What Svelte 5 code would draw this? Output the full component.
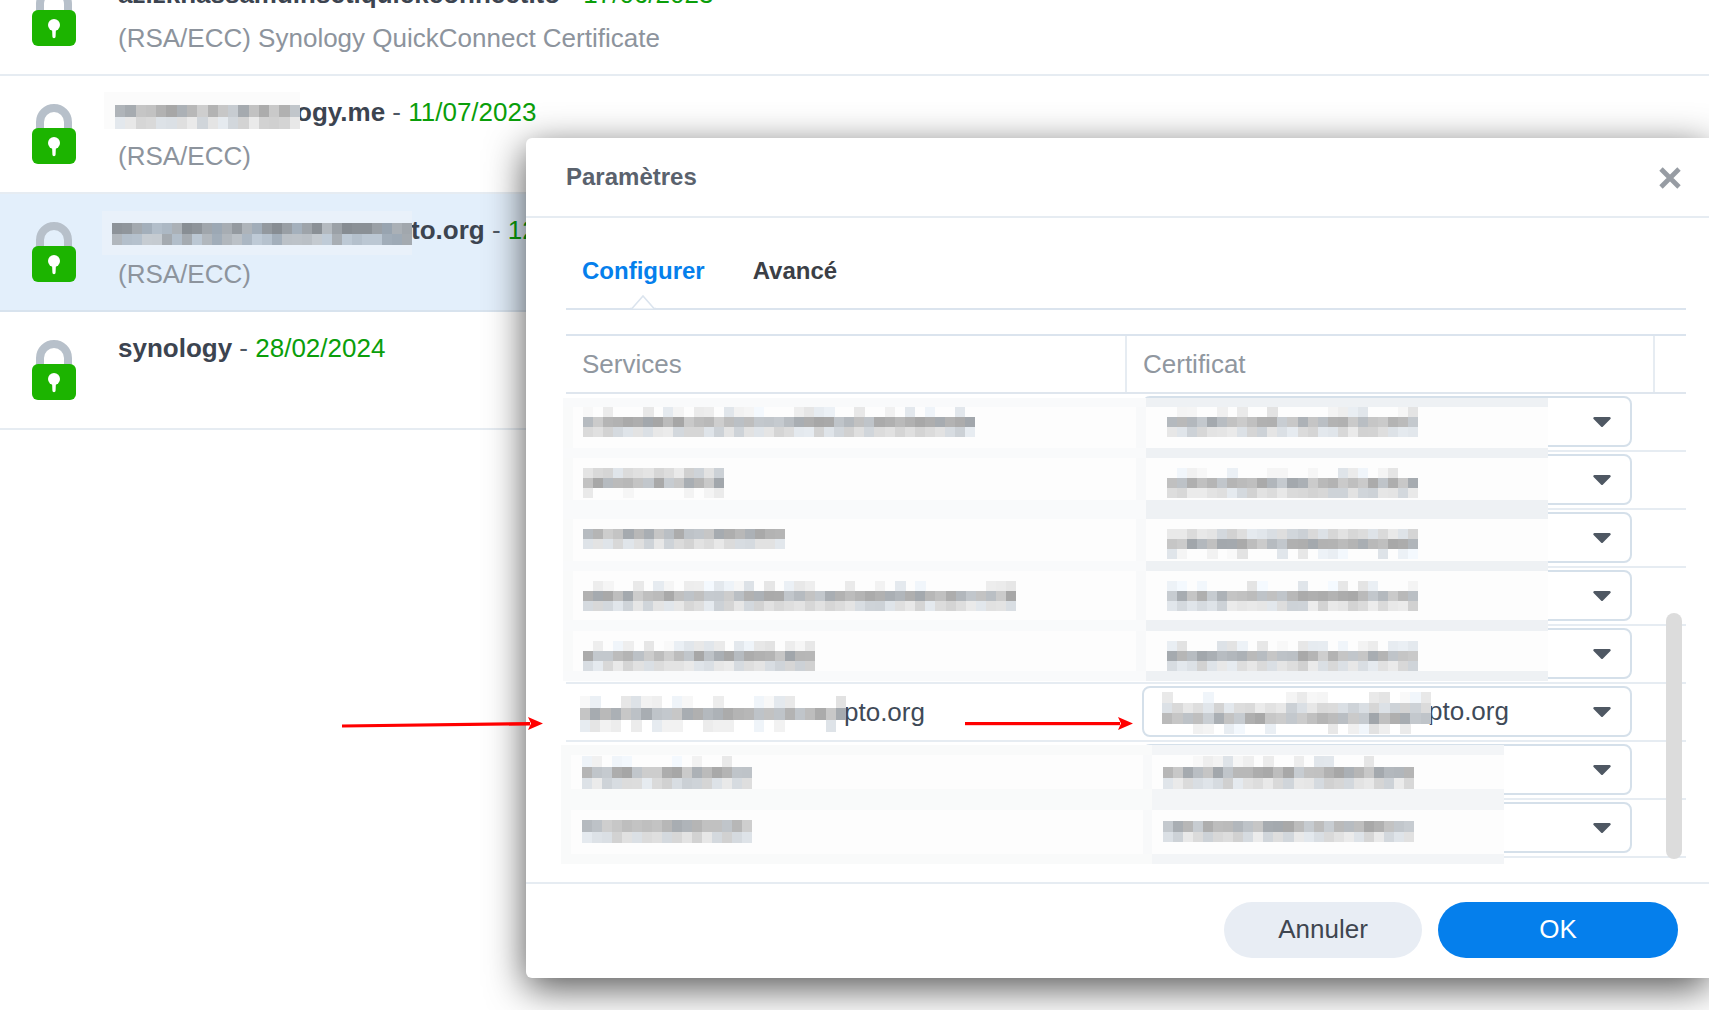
<script>
  const certs = [
    { title: 'azizkhassamdlr.setiquickconnect.to', date: '17/06/2023', sub: '(RSA/ECC) Synology QuickConnect Certificate' },
    { spacer: 178, title: 'ogy.me', date: '11/07/2023', sub: '(RSA/ECC)' },
    { spacer: 293, title: 'to.org', date: '12/07/2023', sub: '(RSA/ECC)', selected: true },
    { title: 'synology', date: '28/02/2024', sub: '' }
  ];

  const rows = [
    {}, {}, {}, {}, {},
    { service: 'pto.org', serviceGap: 264, cert: 'pto.org', certGap: 265 },
    {}, {}
  ];

  function rng(seed) {
    let s = seed * 9301 + 49297;
    return () => {
      s = (s * 9301 + 49297) % 233280;
      return s / 233280;
    };
  }

  const PROFILES = {
    faint: [226, 250, 0.5],
    mid: [208, 236, 1],
    dark: [166, 206, 1],
    deep: [140, 190, 1],
    soft: [170, 205, 1]
  };

  function mosaic(seed, x, y, w, h, cw, bands, tint = 5) {
    const r = rng(seed);
    const out = [];
    const cols = Math.round(w / cw);
    const nrows = bands.length;
    const rowH = h / nrows;
    const cellW = w / cols;
    for (let j = 0; j < nrows; j++) {
      const [lo, hi, cover] = PROFILES[bands[j]];
      for (let i = 0; i < cols; i++) {
        const keep = r();
        const t = r();
        const tone = r();
        if (keep > cover) continue;
        const v = Math.round(lo + (hi - lo) * t);
        const blue = tone > 0.6 ? tint : tint > 5 ? tint / 2 : 0;
        const fill = `rgb(${v - blue},${v},${Math.min(255, v + blue)})`;
        out.push({ x: x + i * cellW, y: y + j * rowH, w: cellW + 0.3, h: rowH + 0.3, fill });
      }
    }
    return out;
  }

  const fl = ['faint', 'dark', 'mid'];
  const dm = ['mid', 'dark', 'faint'];
  const two = ['dark', 'mid'];

  const cells = [
    ...mosaic(1, 115, 105, 185, 24, 10.2, ['dark', 'mid']),
    ...mosaic(2, 112, 223, 300, 22, 10, ['deep', 'soft'], 12),
    ...mosaic(3, 583, 407, 392, 30, 10, fl),
    ...mosaic(4, 583, 468, 141, 30, 10, dm),
    ...mosaic(5, 583, 529, 202, 20, 10, two),
    ...mosaic(6, 583, 581, 433, 30, 10, fl),
    ...mosaic(7, 583, 641, 232, 30, 10, fl),
    ...mosaic(8, 580, 696, 266, 36, 10.2, ['faint', 'dark', 'faint']),
    ...mosaic(9, 582, 756, 170, 33, 10, fl),
    ...mosaic(10, 582, 820, 170, 23, 10, two),
    ...mosaic(11, 1167, 407, 251, 30, 10, fl),
    ...mosaic(12, 1167, 468, 251, 30, 10, fl),
    ...mosaic(13, 1167, 529, 251, 30, 10, dm),
    ...mosaic(14, 1167, 581, 251, 30, 10, fl),
    ...mosaic(15, 1167, 641, 251, 30, 10, fl),
    ...mosaic(16, 1162, 692, 269, 42, 10.3, ['faint', 'mid', 'dark', 'faint']),
    ...mosaic(17, 1163, 756, 251, 33, 10, fl),
    ...mosaic(18, 1163, 821, 251, 21, 10, two)
  ];

  const bandsTop = [[398, 407], [448, 458], [500, 519], [561, 571], [620, 631], [671, 681]];
  const bandsBottom = [[745, 755], [789, 810], [854, 864]];
</script>

{#snippet lock()}
  <svg class="lock" width="44" height="60" viewBox="0 0 44 60" aria-hidden="true">
    <path d="M8 26V18a14 14 0 0 1 28 0v8" fill="none" stroke="#b7c0ca" stroke-width="8" />
    <rect x="0" y="24" width="44" height="36" rx="6" fill="#1cb400" />
    <circle cx="22" cy="39" r="6" fill="#fff" />
    <path d="M20 41h4l-.4 9.6a1.6 1.6 0 0 1-3.2 0z" fill="#fff" />
  </svg>
{/snippet}

<div class="page">
  <ul class="list">
    {#each certs as c}
      <li class="item" class:selected={c.selected}>
        {@render lock()}
        <div class="texts">
          <div class="line">
            {#if c.spacer}<span class="gap" style:width="{c.spacer}px"></span>{/if}<b>{c.title}</b><span class="dash">{' - '}</span><span class="date">{c.date}</span>
          </div>
          <div class="sub">{c.sub}</div>
        </div>
      </li>
    {/each}
  </ul>

  <section class="modal">
    <header class="head">
      <h2>Paramètres</h2>
      <svg class="close" width="24" height="22" viewBox="0 0 24 22" aria-hidden="true">
        <path d="M3 2l18 18M21 2L3 20" stroke="#979ca3" stroke-width="4.8" fill="none" />
      </svg>
    </header>

    <div class="body">
      <nav class="tabs">
        <span class="tab active">Configurer</span>
        <span class="tab">Avancé</span>
        <svg class="notch" width="26" height="15" viewBox="0 0 26 15" aria-hidden="true">
          <path d="M0 13.5h2L13 1l11 12.5h2" fill="#fff" stroke="#dbe4ee" stroke-width="1.6" />
        </svg>
      </nav>

      <div class="table">
        <div class="thead">
          <div class="th one">Services</div>
          <div class="th two">Certificat</div>
          <div class="th three"></div>
        </div>
        {#each rows as row}
          <div class="tr">
            <div class="td-service">
              {#if row.service}<span class="gap" style:width="{row.serviceGap}px"></span><span class="val">{row.service}</span>{/if}
            </div>
            <div class="td-cert">
              <div class="select">
                {#if row.cert}<span class="gap" style:width="{row.certGap}px"></span><span class="val">{row.cert}</span>{/if}
                <svg class="caret" width="18" height="10" viewBox="0 0 18 10" aria-hidden="true">
                  <path d="M1.5 0h15a1.2 1.2 0 0 1 .9 2L10 9.4a1.4 1.4 0 0 1-2 0L.6 2a1.2 1.2 0 0 1 .9-2z" fill="#4f5863" />
                </svg>
              </div>
            </div>
          </div>
        {/each}
        <div class="thumb"></div>
      </div>
    </div>

    <footer class="foot">
      <button class="btn ghost">Annuler</button>
      <button class="btn primary">OK</button>
    </footer>
  </section>

  <svg class="annotations" width="1709" height="1010" viewBox="0 0 1709 1010" aria-hidden="true" shape-rendering="crispEdges">
    <rect x="104" y="92" width="196" height="37" fill="#fbfbfb" />
    <rect x="102" y="211" width="310" height="44" fill="#e9f1fa" />

    <rect x="563" y="398" width="985" height="283" fill="#fdfdfd" />
    <rect x="563" y="398" width="10" height="283" fill="#f9fafa" />
    <rect x="1136" y="398" width="10" height="283" fill="#f8f9fa" />
    {#each bandsTop as b}
      <rect x="563" y={b[0]} width="583" height={b[1] - b[0]} fill="#f9fafb" />
      <rect x="1146" y={b[0]} width="402" height={b[1] - b[0]} fill="#eef1f4" />
    {/each}

    <rect x="561" y="745" width="943" height="119" fill="#fdfdfd" />
    <rect x="561" y="745" width="10" height="119" fill="#f9fafa" />
    <rect x="1143" y="745" width="9" height="119" fill="#f8f9fa" />
    {#each bandsBottom as b}
      <rect x="561" y={b[0]} width="591" height={b[1] - b[0]} fill="#f9fafa" />
      <rect x="1152" y={b[0]} width="352" height={b[1] - b[0]} fill="#f3f5f7" />
    {/each}

    {#each cells as c}
      <rect x={c.x} y={c.y} width={c.w} height={c.h} fill={c.fill} />
    {/each}

    <g shape-rendering="auto" fill="#f00">
      <path d="M342 724.4L530 722v3.4L342 727.4z" />
      <path d="M528 717l15 6.5-15 6.5 3-6.5z" />
      <rect x="965" y="722" width="155" height="3.2" />
      <path d="M1118 717l15 6.5-15 6.5 3-6.5z" />
    </g>
  </svg>
</div>

<style>
  :global(body) {
    margin: 0;
    background: #fff;
  }
  .page {
    position: relative;
    width: 1709px;
    height: 1010px;
    overflow: hidden;
    background: #fff;
    font-family: "Liberation Sans", Arial, sans-serif;
    color: #3c4450;
  }
  .list {
    list-style: none;
    margin: -42px 0 0;
    padding: 0;
  }
  .item {
    box-sizing: border-box;
    display: flex;
    align-items: flex-start;
    gap: 42px;
    height: 118px;
    padding: 28px 0 0 32px;
    border-bottom: 2px solid #e6ecf2;
  }
  .item.selected {
    background: #e3effb;
    border-bottom-color: #d8e3ee;
  }
  .lock {
    flex: none;
  }
  .texts {
    margin-top: -14px;
    font-size: 26px;
    line-height: 44px;
    white-space: nowrap;
  }
  .line b {
    font-weight: 700;
    color: #3c4450;
  }
  .dash {
    white-space: pre;
    color: #4f5863;
  }
  .date {
    color: #0a9e0a;
  }
  .sub {
    color: #8d949d;
  }
  .gap {
    display: inline-block;
    height: 1px;
  }
  .modal {
    position: absolute;
    left: 526px;
    top: 138px;
    right: 0;
    bottom: 32px;
    display: flex;
    flex-direction: column;
    background: #fff;
    border-radius: 6px 0 0 6px;
    box-shadow: 0 10px 38px rgba(0, 0, 0, 0.68);
  }
  .head {
    box-sizing: border-box;
    flex: none;
    height: 80px;
    display: flex;
    align-items: center;
    justify-content: space-between;
    padding: 0 27px 0 40px;
    border-bottom: 2px solid #e6ecf2;
  }
  .head h2 {
    margin: 0;
    font-size: 24px;
    line-height: 1;
    font-weight: 700;
    color: #5a626d;
  }
  .close {
    margin-top: 2px;
  }
  .body {
    flex: 1;
    padding: 0 23px 0 40px;
  }
  .tabs {
    position: relative;
    box-sizing: border-box;
    height: 92px;
    padding: 36px 0 0 16px;
    display: flex;
    gap: 48px;
    border-bottom: 2px solid #dbe4ee;
  }
  .tab {
    font-size: 24px;
    line-height: 34px;
    font-weight: 700;
    color: #3b3f46;
  }
  .tab.active {
    color: #057fec;
  }
  .notch {
    position: absolute;
    left: 64px;
    bottom: -2px;
  }
  .table {
    position: relative;
    margin-top: 24px;
    border-top: 2px solid #dbe4ee;
  }
  .thead {
    box-sizing: border-box;
    display: grid;
    grid-template-columns: 559px 528px 1fr;
    height: 58px;
    border-bottom: 2px solid #dfe6ee;
  }
  .th {
    padding-left: 16px;
    font-size: 26px;
    line-height: 56px;
    color: #90979f;
  }
  .th.two {
    border-left: 2px solid #e6ecf2;
  }
  .th.three {
    border-left: 2px solid #e6ecf2;
  }
  .tr {
    box-sizing: border-box;
    display: grid;
    grid-template-columns: 559px 1fr;
    height: 58px;
    border-bottom: 2px solid #e6ecf2;
  }
  .td-service {
    display: flex;
    align-items: center;
    padding: 0 0 0 14px;
    font-size: 26px;
  }
  .td-cert {
    padding: 2px 54px 0 17px;
  }
  .select {
    box-sizing: border-box;
    height: 51px;
    display: flex;
    align-items: center;
    padding: 0 19px 0 19px;
    border: 2px solid #d5e0ea;
    border-radius: 8px;
    background: #fff;
    font-size: 26px;
  }
  .val {
    color: #3f4a58;
  }
  .caret {
    margin-left: auto;
  }
  .thumb {
    position: absolute;
    right: 4px;
    top: 277px;
    width: 16px;
    height: 246px;
    border-radius: 8px;
    background: #dcdcdc;
  }
  .foot {
    box-sizing: border-box;
    flex: none;
    height: 96px;
    display: flex;
    justify-content: flex-end;
    gap: 16px;
    padding: 18px 31px 0 0;
    border-top: 2px solid #e6ecf2;
  }
  .btn {
    height: 56px;
    padding: 0 0 2px;
    border: none;
    border-radius: 28px;
    font-family: inherit;
    font-size: 26px;
  }
  .btn.ghost {
    width: 198px;
    background: #e8edf4;
    color: #3f4650;
  }
  .btn.primary {
    width: 240px;
    background: #057fec;
    color: #fff;
  }
  .annotations {
    position: absolute;
    left: 0;
    top: 0;
    pointer-events: none;
  }
</style>
